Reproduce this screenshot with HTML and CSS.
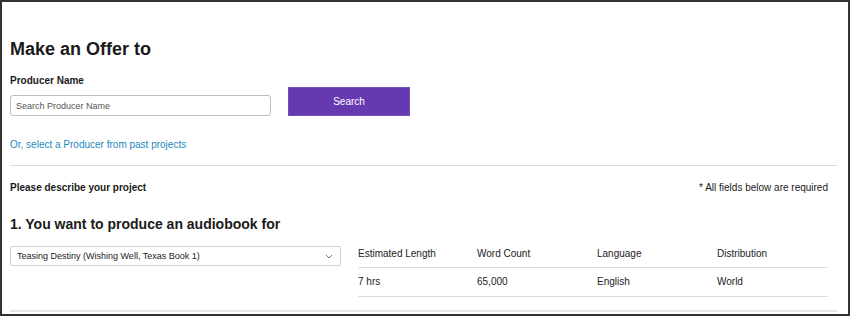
FILE: index.html
```html
<!DOCTYPE html>
<html lang="en">
<head>
  <meta charset="UTF-8" />
  <meta name="viewport" content="width=device-width, initial-scale=1.0"/>
  <title>Make an Offer</title>
  <link rel="stylesheet" href="styles.css">
</head>
<body>
  <div class="offer-frame">
    <h1 class="offer-title">Make an Offer to</h1>

    <label class="field-label" for="producerSearch">Producer Name</label>
    <div class="search-row">
      <input type="text" id="producerSearch" class="search-input" placeholder="Search Producer Name"/>
      <button class="search-btn">Search</button>
    </div>

    <a href="#" class="past-link">Or, select a Producer from past projects</a>

    <hr class="divider">

    <div class="describe-row">
      <span class="describe-title">Please describe your project</span>
      <span class="required-note">* All fields below are required</span>
    </div>

    <h2 class="step-title">1. You want to produce an audiobook for</h2>

    <div class="book-row">
      <div class="book-select">
        <span>Teasing Destiny (Wishing Well, Texas Book 1)</span>
        <svg width="8" height="5" viewBox="0 0 8 5"><path d="M1 1l3 3 3-3" fill="none" stroke="#777" stroke-width="1"/></svg>
      </div>

      <div class="book-details">
        <div class="cell head">Estimated Length</div>
        <div class="cell head">Word Count</div>
        <div class="cell head">Language</div>
        <div class="cell head">Distribution</div>
        <div class="cell">7 hrs</div>
        <div class="cell">65,000</div>
        <div class="cell">English</div>
        <div class="cell">World</div>
      </div>
    </div>

    <hr class="divider bottom">
  </div>
</body>
</html>
```

FILE: styles.css
```css
body {
  font-family: "Liberation Sans", Arial, sans-serif;
  margin: 0;
  background: #fff;
  color: #1a1a1a;
}

.offer-frame {
  box-sizing: border-box;
  width: 850px;
  height: 316px;
  border: 2px solid #333;
  padding: 36px 11px 0 8px;
  overflow: hidden;
}

.offer-title {
  font-size: 18px;
  line-height: 22px;
  margin: 0 0 15px;
}

.field-label {
  display: block;
  font-size: 10px;
  line-height: 12px;
  font-weight: bold;
}

.search-row {
  display: flex;
  align-items: flex-end;
  gap: 17px;
}

.search-input {
  box-sizing: border-box;
  width: 261px;
  height: 21px;
  margin: 0;
  padding: 0 5px;
  border: 1px solid #bdbdbd;
  border-radius: 3px;
  font-family: inherit;
  font-size: 9px;
}

.search-input::placeholder {
  color: #555;
}

.search-btn {
  width: 122px;
  height: 29px;
  border: 1px solid #7450bd;
  background-color: #6739b0;
  color: white;
  font-family: inherit;
  font-size: 10px;
  cursor: pointer;
}

.past-link {
  display: block;
  margin-top: 23px;
  font-size: 10px;
  line-height: 12px;
  color: #2289bd;
  text-decoration: none;
}

.divider {
  border: none;
  border-top: 1px solid #dcdcdc;
  margin: 14px 0 0;
}

.divider.bottom {
  border-top: 2px solid #e6e6e6;
  margin-top: 13px;
}

.describe-row {
  display: flex;
  justify-content: space-between;
  padding-right: 9px;
  margin-top: 16px;
  font-size: 10px;
  line-height: 12px;
}

.describe-title {
  font-weight: bold;
}

.step-title {
  font-size: 14px;
  line-height: 17px;
  margin: 22px 0 13px;
}

.book-row {
  display: flex;
  gap: 17px;
  padding-right: 9px;
}

.book-select {
  box-sizing: border-box;
  width: 331px;
  height: 20px;
  display: flex;
  align-items: center;
  justify-content: space-between;
  padding: 0 7px 0 6px;
  border: 1px solid #d0d0d0;
  border-radius: 2px;
  font-size: 9px;
  color: #222;
}

.book-details {
  flex: 1;
  display: grid;
  grid-template-columns: 119px 120px 120px auto;
  font-size: 10px;
  line-height: 12px;
  color: #222;
}

.cell {
  padding: 8px 0;
  border-bottom: 1px solid #dcdcdc;
}

.cell.head {
  padding: 2px 0 7px;
}
```
